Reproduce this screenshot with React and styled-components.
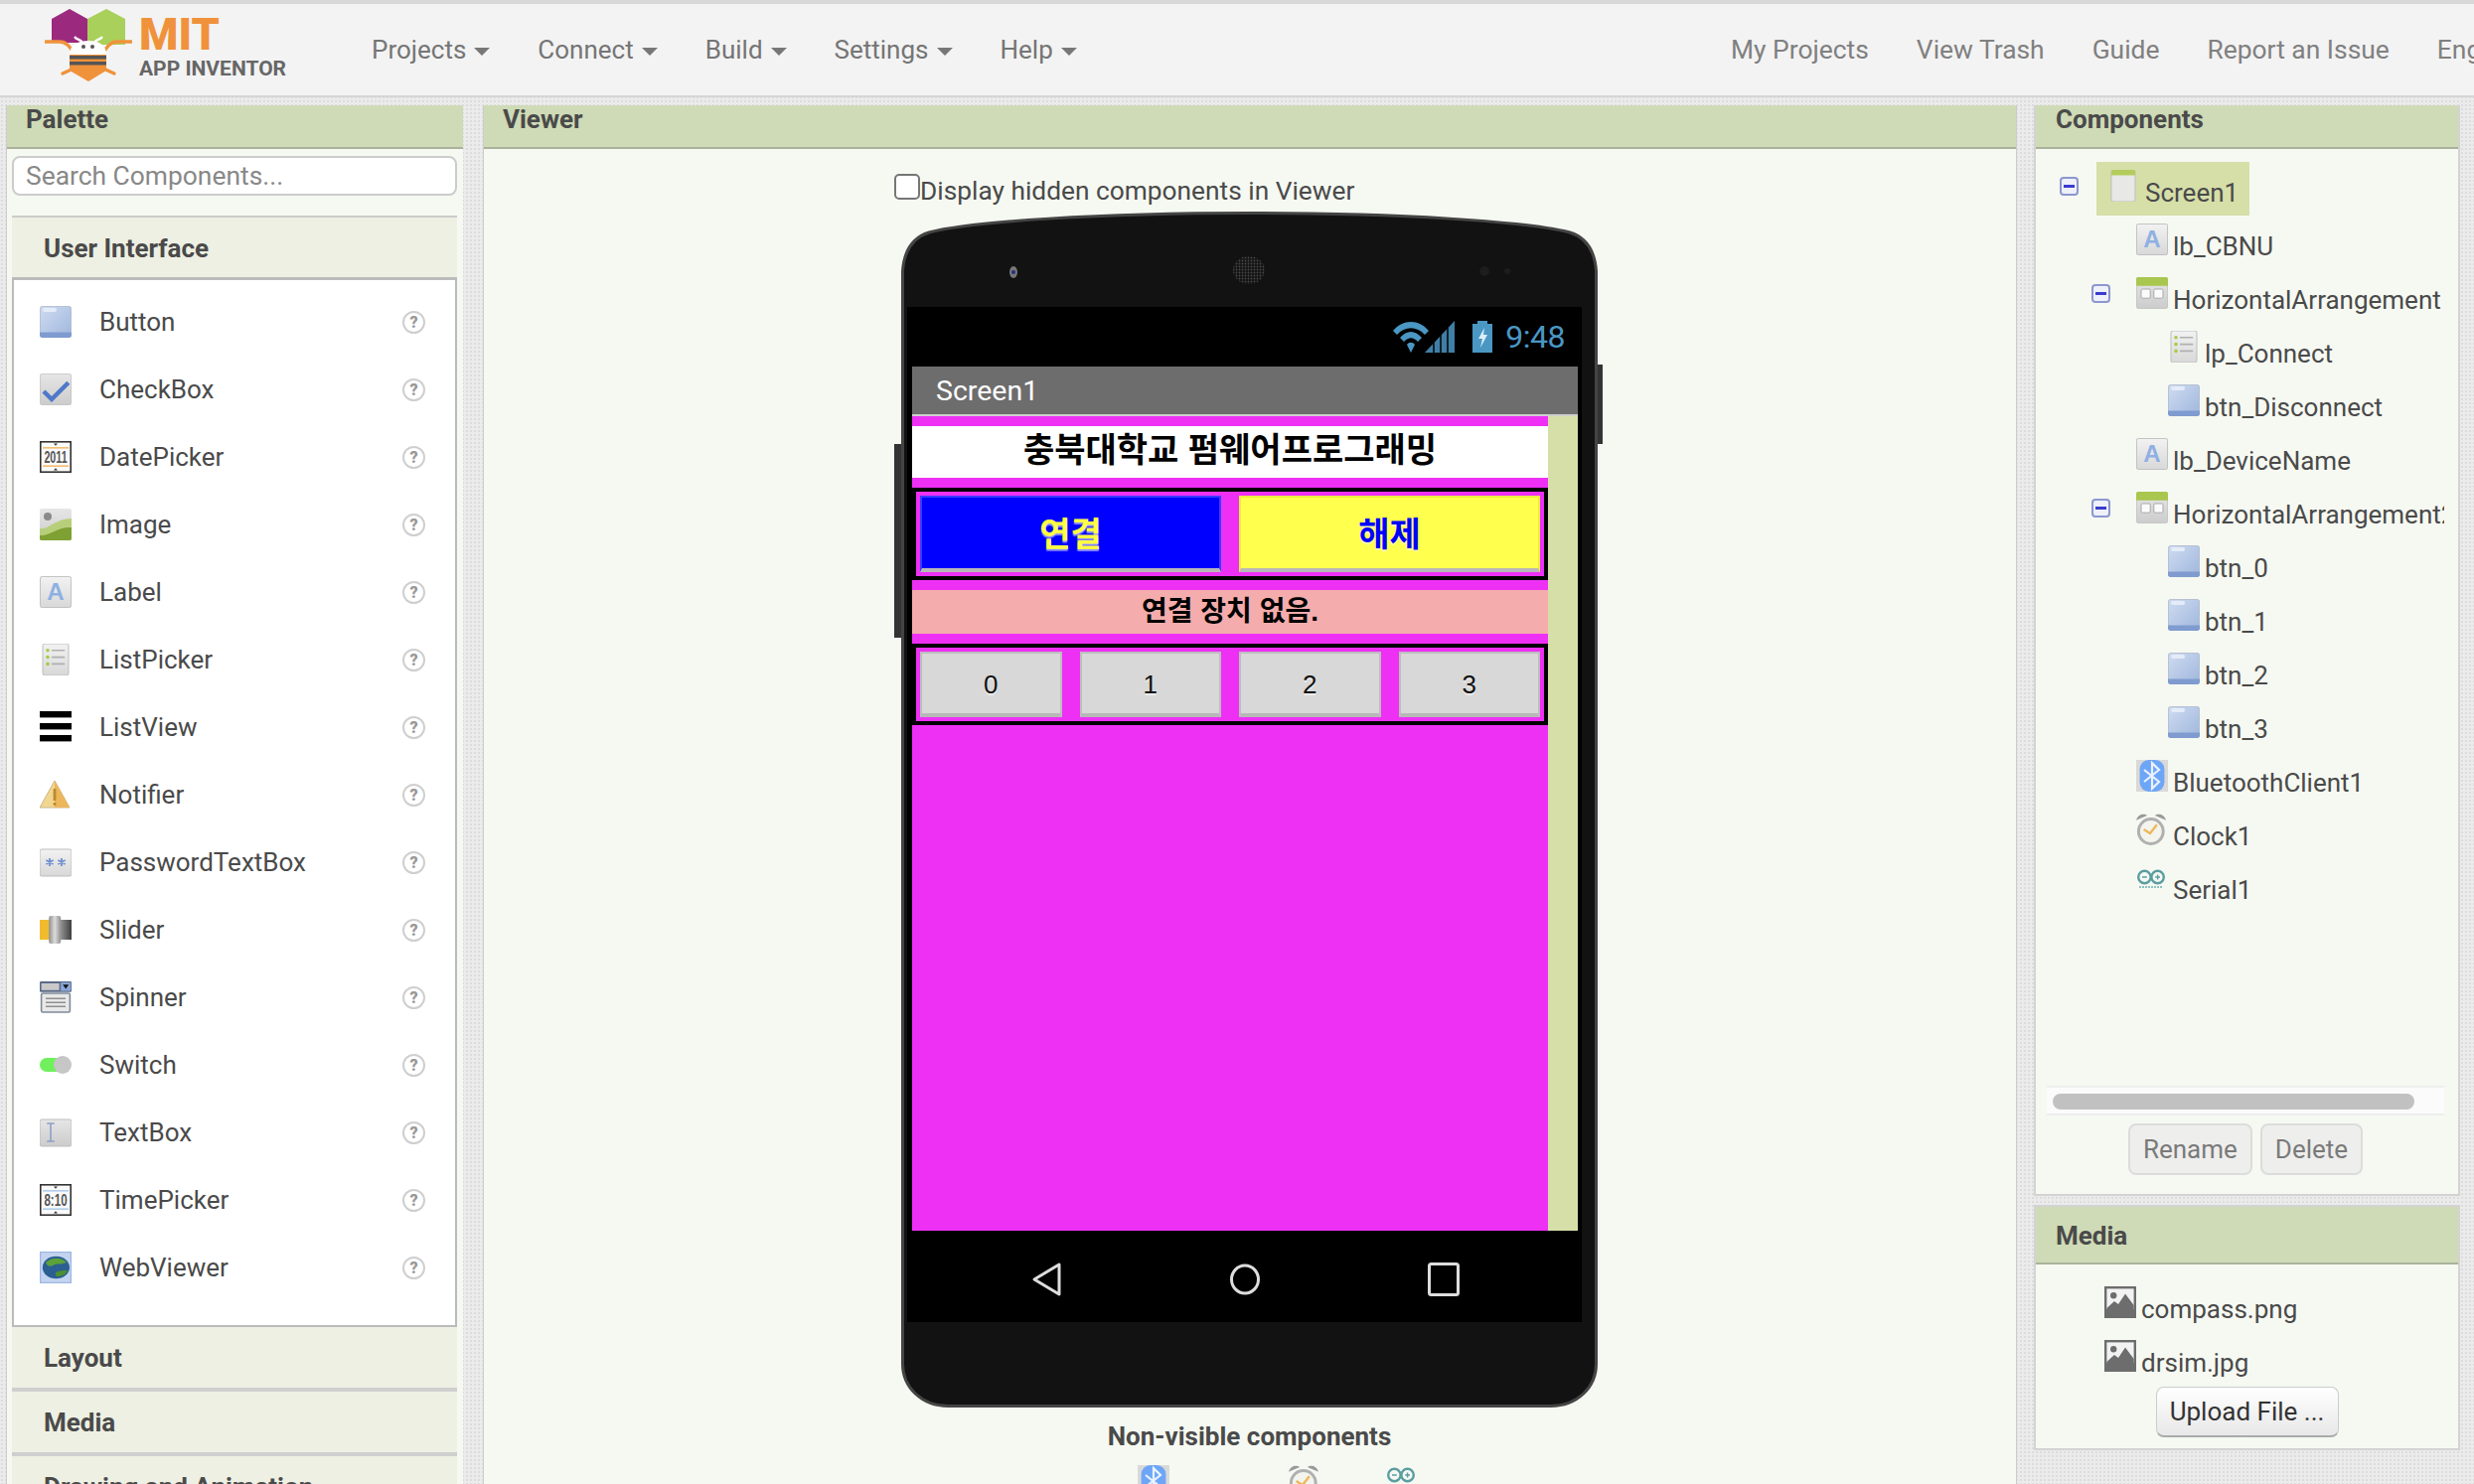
import React from "react"
import styled, { createGlobalStyle } from "styled-components"

const GlobalStyle = createGlobalStyle`
  html, body {
    margin: 0;
    padding: 0;
    background: #ebebeb;
  }
  * {
    box-sizing: border-box;
  }
`

const palette = [
  ["button", "Button"],
  ["checkbox", "CheckBox"],
  ["datepicker", "DatePicker"],
  ["image", "Image"],
  ["label", "Label"],
  ["listpicker", "ListPicker"],
  ["listview", "ListView"],
  ["notifier", "Notifier"],
  ["password", "PasswordTextBox"],
  ["slider", "Slider"],
  ["spinner", "Spinner"],
  ["switch", "Switch"],
  ["textbox", "TextBox"],
  ["timepicker", "TimePicker"],
  ["webviewer", "WebViewer"],
]

const tree = [
  { level: 0, icon: "screen", name: "Screen1", open: true, selected: true },
  { level: 1, icon: "label", name: "lb_CBNU" },
  { level: 1, icon: "arrangement", name: "HorizontalArrangement", open: true },
  { level: 2, icon: "listpicker", name: "lp_Connect" },
  { level: 2, icon: "button", name: "btn_Disconnect" },
  { level: 1, icon: "label", name: "lb_DeviceName" },
  { level: 1, icon: "arrangement", name: "HorizontalArrangement2", open: true },
  { level: 2, icon: "button", name: "btn_0" },
  { level: 2, icon: "button", name: "btn_1" },
  { level: 2, icon: "button", name: "btn_2" },
  { level: 2, icon: "button", name: "btn_3" },
  { level: 1, icon: "bluetooth", name: "BluetoothClient1" },
  { level: 1, icon: "clock", name: "Clock1" },
  { level: 1, icon: "serial", name: "Serial1" },
]

const icons = {
  button: (
    <>
      <rect x=".2" y=".2" width="15.6" height="15.6" rx="1.2" fill="url(#gBlue)" stroke="#a9b4c8" strokeWidth=".4" />
      <path d="M0 13.2 H16 V14.8 A1.2 1.2 0 0 1 14.8 16 H1.2 A1.2 1.2 0 0 1 0 14.8 Z" fill="#7f9bcf" />
      <rect x="1.5" y="1" width="7" height="2" rx="1" fill="#e4ecf8" />
    </>
  ),
  checkbox: (
    <>
      <rect x=".2" y=".2" width="15.6" height="15.6" rx="1" fill="url(#gGray)" stroke="#bdbdbd" strokeWidth=".4" />
      <path d="M2 9 L6 13 L14.4 4.6" fill="none" stroke="#4f78c8" strokeWidth="2.2" />
    </>
  ),
  datepicker: (
    <>
      <rect x=".4" y=".4" width="15.2" height="15.2" fill="#fafafa" stroke="#333" strokeWidth=".8" />
      <path d="M1.5 3.4 H14.5 M1.5 12.6 H14.5" stroke="#efa94a" strokeWidth=".6" />
      <path d="M7 1.2 H9 L8 2.4 Z M7 14.8 H9 L8 13.6 Z" fill="#333" />
      <text x="2.2" y="11" fontFamily="Liberation Sans" fontSize="8.6" fontWeight="700" fill="#555" textLength="11.6" lengthAdjust="spacingAndGlyphs">2011</text>
    </>
  ),
  image: (
    <>
      <rect width="16" height="16" rx="1" fill="url(#gGray)" />
      <circle cx="4" cy="4" r="2" fill="#8a8a8a" />
      <path d="M0 10 C4 11 8 5 16 5 V15 A1 1 0 0 1 15 16 H1 A1 1 0 0 1 0 15 Z" fill="#b7cf7a" />
      <path d="M0 13.5 C5 14 9 9 16 9.5 V15 A1 1 0 0 1 15 16 H1 A1 1 0 0 1 0 15 Z" fill="#7fa032" />
    </>
  ),
  label: (
    <>
      <rect x=".2" y=".2" width="15.6" height="15.6" rx="1" fill="url(#gLight)" stroke="#bdbdbd" strokeWidth=".5" />
      <text x="8" y="12.2" textAnchor="middle" fontFamily="Liberation Sans" fontSize="12" fontWeight="700" fill="#8fb0e2">A</text>
    </>
  ),
  listpicker: (
    <>
      <rect x="1.5" y="0" width="13" height="16" rx="1" fill="url(#gLight)" stroke="#bdbdbd" strokeWidth=".5" />
      <circle cx="4" cy="3.4" r=".9" fill="#a6cc48" />
      <circle cx="4" cy="6.8" r=".9" fill="#a6cc48" />
      <circle cx="4" cy="10.2" r=".9" fill="#a6cc48" />
      <path d="M6 3.4 H12.6 M6 6.8 H12.6 M6 10.2 H12.6" stroke="#b0b0b0" strokeWidth=".8" />
    </>
  ),
  listview: (
    <>
      <rect y="0" width="16" height="3.2" fill="#000" />
      <rect y="6" width="16" height="3.2" fill="#000" />
      <rect y="12" width="16" height="3.2" fill="#000" />
    </>
  ),
  notifier: (
    <>
      <path d="M7.5 1 L15 14.5 H0 Z" fill="#f3d68e" stroke="#c9b58a" strokeWidth=".5" />
      <path d="M7.5 1 L15 14.5 H7.5 Z" fill="#ecb65a" />
      <rect x="6.8" y="5" width="1.4" height="6" fill="#b98b32" />
      <rect x="6.8" y="12" width="1.4" height="1.4" fill="#b98b32" />
    </>
  ),
  password: (
    <>
      <rect y="1.5" width="16" height="13.5" rx="1" fill="url(#gLight)" stroke="#bdbdbd" strokeWidth=".5" />
      <path d="M5 6 V10 M3.2 7 L6.8 9 M3.2 9 L6.8 7 M11 6 V10 M9.2 7 L12.8 9 M9.2 9 L12.8 7" stroke="#6f8fd0" strokeWidth=".9" />
    </>
  ),
  slider: (
    <>
      <rect y="3" width="5" height="10" fill="#f0bb2e" />
      <rect x="10" y="3" width="6" height="10" fill="url(#gDark)" />
      <rect x="4.6" y="1" width="6" height="14" rx="1" fill="url(#gKnob)" />
    </>
  ),
  spinner: (
    <>
      <rect x=".8" y="6" width="14.4" height="9.5" rx=".8" fill="#e8e8e8" stroke="#7f8a99" strokeWidth=".8" />
      <path d="M3 8.6 H13 M3 10.6 H13 M3 12.6 H13" stroke="#8f8f8f" strokeWidth=".7" />
      <rect x="0" y="0" width="16" height="5.4" rx=".6" fill="#5b6b87" />
      <rect x=".8" y="1" width="9" height="3.4" fill="#c9c9c9" />
      <rect x="10.6" y=".6" width="5" height="4.2" fill="#8ba6d9" />
      <path d="M11.6 1.6 H14.6 L13.1 3.8 Z" fill="#111" />
    </>
  ),
  switch: (
    <>
      <rect x="0" y="4.5" width="13" height="7" rx="3.5" fill="#6ff05c" />
      <circle cx="11.5" cy="8" r="4.5" fill="#c6c6c6" />
    </>
  ),
  textbox: (
    <>
      <rect y="1.5" width="16" height="13.5" rx="1" fill="url(#gGray)" stroke="#bdbdbd" strokeWidth=".5" />
      <path d="M3.6 3.5 H7.4 M3.6 12.5 H7.4 M5.5 3.5 V12.5" stroke="#8da0c9" strokeWidth=".8" fill="none" />
    </>
  ),
  timepicker: (
    <>
      <rect x=".4" y=".4" width="15.2" height="15.2" fill="#fafafa" stroke="#333" strokeWidth=".8" />
      <path d="M1.5 3.4 H14.5 M1.5 12.6 H14.5" stroke="#9cc0e6" strokeWidth=".6" />
      <path d="M7 1.2 H9 L8 2.4 Z M7 14.8 H9 L8 13.6 Z" fill="#333" />
      <text x="2.2" y="11" fontFamily="Liberation Sans" fontSize="8.6" fontWeight="700" fill="#555" textLength="11.6" lengthAdjust="spacingAndGlyphs">8:10</text>
    </>
  ),
  webviewer: (
    <>
      <rect x=".3" y=".3" width="15.4" height="15.4" fill="#c3d4f0" stroke="#9db7e2" strokeWidth=".6" />
      <ellipse cx="8.2" cy="8" rx="6.8" ry="5.6" fill="#2b5f92" />
      <path d="M3 5.5 C6 2.6 11 2.6 13.5 5.5 C10 7 9 5.5 6.5 7 C5 8 3.5 7 3 5.5 Z" fill="#5da13a" />
      <path d="M8 10.5 C10 9.4 13 9.4 14 9.5 C13 12 10 13 8 12.2 Z" fill="#4c8f30" />
    </>
  ),
  screen: (
    <>
      <rect x="1.5" y="0" width="12" height="16" rx="1" fill="#e8e8e6" stroke="#bdbdbd" strokeWidth=".5" />
      <path d="M1.5 1 A1 1 0 0 1 2.5 0 H12.5 A1 1 0 0 1 13.5 1 V2.8 H1.5 Z" fill="#b4cc5a" />
    </>
  ),
  arrangement: (
    <>
      <rect x=".2" y=".2" width="15.6" height="15.6" rx="1" fill="url(#gGray)" stroke="#bdbdbd" strokeWidth=".4" />
      <path d="M0 1 A1 1 0 0 1 1 0 H15 A1 1 0 0 1 16 1 V4.4 H0 Z" fill="#a9c64e" />
      <rect x="2.5" y="6" width="4.6" height="4.6" rx=".6" fill="#fbfbfb" stroke="#a8a8a8" strokeWidth=".5" />
      <rect x="8.9" y="6" width="4.6" height="4.6" rx=".6" fill="#fbfbfb" stroke="#a8a8a8" strokeWidth=".5" />
    </>
  ),
  bluetooth: (
    <>
      <rect width="16" height="16" fill="#d9d9d9" />
      <rect x="1.8" y="0" width="12.4" height="16" rx="4.6" fill="#6ea6f7" />
      <path d="M4 5 L11.5 11 L8 14.4 V1.6 L11.5 5 L4 11" fill="none" stroke="#eaf2ff" strokeWidth="1.1" />
    </>
  ),
  clock: (
    <>
      <path d="M0 3.4 C1 0 4 -.2 5.6 1 Z M15 3.4 C14 0 11 -.2 9.4 1 Z" fill="#9a9a9a" />
      <circle cx="7.4" cy="9" r="6.2" fill="#f4f4ee" stroke="#b0b0b0" strokeWidth="1.5" />
      <path d="M3.8 8 L7 10 L10.4 5.6" fill="none" stroke="#eeb75a" strokeWidth="1.2" />
    </>
  ),
  serial: (
    <>
      <circle cx="4.2" cy="5" r="3.1" fill="none" stroke="#5a9ea1" strokeWidth="1.2" />
      <circle cx="10.8" cy="5" r="3.1" fill="none" stroke="#5a9ea1" strokeWidth="1.2" />
      <path d="M3 5 H5.4 M9.6 5 H12 M10.8 3.8 V6.2" stroke="#5a9ea1" strokeWidth=".7" />
      <path d="M1.5 10 H13.5" stroke="#8fc0c2" strokeWidth="1" strokeDasharray="1 .5" />
    </>
  ),
  media: (
    <>
      <rect width="16" height="16" fill="#6d6d6d" />
      <rect x="1.2" y="1.2" width="13.6" height="10.4" fill="#f2f2f2" />
      <circle cx="4.6" cy="4.6" r="1.6" fill="#6d6d6d" />
      <path d="M1.2 11 L5 7.5 L7 9 L10.5 3.8 L14.8 9.5 V12 H1.2 Z" fill="#6d6d6d" />
    </>
  ),
}

const Gradients = () => (
  <GradientDefs>
    <defs>
      <linearGradient id="gBlue" x1="0" y1="0" x2="1" y2="1">
        <stop offset="0" stopColor="#cfdcf1" />
        <stop offset="1" stopColor="#9fb6dd" />
      </linearGradient>
      <linearGradient id="gGray" x1="0" y1="0" x2="0" y2="1">
        <stop offset="0" stopColor="#e6e6e6" />
        <stop offset="1" stopColor="#cccccc" />
      </linearGradient>
      <linearGradient id="gLight" x1="0" y1="0" x2="0" y2="1">
        <stop offset="0" stopColor="#f2f2f2" />
        <stop offset="1" stopColor="#d8d8d8" />
      </linearGradient>
      <linearGradient id="gDark" x1="0" y1="0" x2="1" y2="0">
        <stop offset="0" stopColor="#9a9a9a" />
        <stop offset="1" stopColor="#3f3f3f" />
      </linearGradient>
      <linearGradient id="gKnob" x1="0" y1="0" x2="1" y2="0">
        <stop offset="0" stopColor="#8f8f8f" />
        <stop offset=".5" stopColor="#dcdcdc" />
        <stop offset="1" stopColor="#8f8f8f" />
      </linearGradient>
      <pattern id="gMesh" width="3" height="3" patternUnits="userSpaceOnUse">
        <circle cx="1.5" cy="1.5" r=".9" fill="#484848" />
      </pattern>
    </defs>
  </GradientDefs>
)

const Glyph = ({ name }) => <GlyphSvg viewBox="0 0 16 16">{icons[name]}</GlyphSvg>

const Logo = () => (
  <LogoMark viewBox="0 0 88 74">
    <path d="M25 0 L43 10 V34 H7 V10 Z" fill="#9b2a7f" />
    <path d="M62 0 L81 10 V36 H43 V10 Z" fill="#a9d05a" />
    <path d="M1 33 H15 C22 33 25 38 29 44 M87 33 H73 C66 33 63 38 59 44" fill="none" stroke="#f0923b" strokeWidth="3.4" strokeLinecap="round" />
    <path d="M29 60 L18 65 M59 60 L70 65" stroke="#f0923b" strokeWidth="3.4" strokeLinecap="round" />
    <path d="M30 28 C33 32 36 30 38 34 M58 28 C55 32 52 30 50 34" fill="none" stroke="#fff" strokeWidth="2.4" />
    <path d="M25 46 C25 36 34 32 44 32 C54 32 62 36 62 46 Z" fill="#fff" />
    <circle cx="39" cy="38" r="2" fill="#555" />
    <circle cx="48" cy="38" r="2" fill="#555" />
    <rect x="25" y="46" width="37" height="12" fill="#f0923b" />
    <rect x="25" y="47" width="37" height="3.5" fill="#555" />
    <rect x="25" y="53" width="37" height="3.5" fill="#555" />
    <path d="M25 57 H62 V62 L44 73 L25 62 Z" fill="#f0923b" />
  </LogoMark>
)

const Wifi = () => (
  <StatusSvg viewBox="-3 0 68 36" width="68" height="36">
    <path d="M1 12 C11 0 27 0 37 12 L33 16 C25 7 13 7 5 16 Z M8 19 C15 11 23 11 30 19 L26 23 C21 18 17 18 12 23 Z M15 26 C17 23 21 23 23 26 L19 34 Z" fill="#4a97c4" />
    <path d="M33 34 L63 2 V34 Z" fill="#3f7fa6" />
    <path d="M42 34 V24 M49 34 V16 M56 34 V9" stroke="#000" strokeWidth="1.5" />
  </StatusSvg>
)

const Battery = () => (
  <StatusSvg viewBox="0 0 22 32" width="22" height="32">
    <rect x="6" y="0" width="10" height="3" fill="#4a97c4" />
    <rect x="1" y="3" width="20" height="29" fill="#4a97c4" />
    <path d="M13 7 L7 18 H11 L9 27 L16 14 H12 Z" fill="#dbeef8" />
  </StatusSvg>
)

const NavIcons = () => (
  <>
    <NavSvg viewBox="0 0 32 36">
      <path d="M29 3 L4 18 L29 33 Z" fill="none" stroke="#ddd" strokeWidth="3" strokeLinejoin="round" />
    </NavSvg>
    <NavSvg viewBox="0 0 32 36">
      <ellipse cx="16" cy="18" rx="13.5" ry="14" fill="none" stroke="#ddd" strokeWidth="3" />
    </NavSvg>
    <NavSvg viewBox="0 0 32 36">
      <rect x="1.5" y="2.5" width="29" height="31" rx="2" fill="none" stroke="#ddd" strokeWidth="3" />
    </NavSvg>
  </>
)

const App = () => {
  return (
    <Page>
      <GlobalStyle />
      <Gradients />
      <Header>
        <Brand>
          <Logo />
          <BrandText>
            <BrandMit>MIT</BrandMit>
            <BrandName>APP INVENTOR</BrandName>
          </BrandText>
        </Brand>
        <MainNav>
          {["Projects", "Connect", "Build", "Settings", "Help"].map((item) => (
            <NavItem key={item}>
              {item}
              <Caret />
            </NavItem>
          ))}
        </MainNav>
        <SideNav>
          {["My Projects", "View Trash", "Guide", "Report an Issue", "English"].map((item) => (
            <NavItem key={item} $light>
              {item}
            </NavItem>
          ))}
        </SideNav>
      </Header>

      <Workspace>
        <PalettePanel>
          <PanelHead>Palette</PanelHead>
          <SearchBox placeholder="Search Components..." />
          <Category $first>User Interface</Category>
          <PaletteList>
            {palette.map(([icon, name]) => (
              <PaletteRow key={name}>
                <Glyph name={icon} />
                <PaletteName>{name}</PaletteName>
                <HelpBadge>?</HelpBadge>
              </PaletteRow>
            ))}
          </PaletteList>
          <Category>Layout</Category>
          <Category>Media</Category>
          <Category>Drawing and Animation</Category>
        </PalettePanel>

        <ViewerPanel>
          <PanelHead>Viewer</PanelHead>
          <ViewerBody>
            <ViewerColumn>
              <HiddenToggle>
                <HiddenCheck type="checkbox" />
                Display hidden components in Viewer
              </HiddenToggle>
              <Phone>
                <PhoneFrame viewBox="0 0 701 1204">
                  <path
                    d="M1.5 60 C3 38 12 26 28 21 C70 10 200 1.5 350 1.5 C500 1.5 631 10 673 21 C689 26 698 38 699.5 60 L699.5 1160 C699.5 1184 680 1202.5 654 1202.5 L47 1202.5 C21 1202.5 1.5 1184 1.5 1160 Z"
                    fill="#121212"
                    stroke="#444"
                    strokeWidth="3"
                  />
                  <ellipse cx="113" cy="61" rx="4" ry="6" fill="#777" />
                  <circle cx="113" cy="61" r="2" fill="#23307c" />
                  <ellipse cx="350" cy="59" rx="16" ry="14" fill="url(#gMesh)" />
                  <circle cx="587" cy="60" r="5" fill="#1d1d1d" />
                  <circle cx="610" cy="60" r="3" fill="#1d1d1d" />
                </PhoneFrame>
                <SideKey $side="left" />
                <SideKey $side="right" />
                <Screen>
                  <StatusBar>
                    <Wifi />
                    <Battery />
                    <StatusTime>9:48</StatusTime>
                  </StatusBar>
                  <AppArea>
                    <TitleBar>Screen1</TitleBar>
                    <FormRow>
                      <Form>
                        <FormLabel $large>충북대학교 펌웨어프로그래밍</FormLabel>
                        <Arrangement>
                          <FormButton $tall $bg="#0000ff" $fg="#ffff44" $edge="#3a3aff">연결</FormButton>
                          <FormButton $tall $bg="#ffff4d" $fg="#0000ff" $edge="#eded40">해제</FormButton>
                        </Arrangement>
                        <FormLabel $bg="#f4acac">연결 장치 없음.</FormLabel>
                        <Arrangement>
                          {["0", "1", "2", "3"].map((n) => (
                            <FormButton key={n} $bg="#d7d8d7" $fg="#111" $edge="#bdbdbd">{n}</FormButton>
                          ))}
                        </Arrangement>
                      </Form>
                      <ScrollStrip />
                    </FormRow>
                  </AppArea>
                  <NavBar>
                    <NavIcons />
                  </NavBar>
                </Screen>
              </Phone>
              <NonVisibleTitle>Non-visible components</NonVisibleTitle>
              <NonVisibleRow>
                <Glyph name="bluetooth" />
                <NonVisibleGap $w={120} />
                <Glyph name="clock" />
                <NonVisibleGap $w={66} />
                <Glyph name="serial" />
              </NonVisibleRow>
            </ViewerColumn>
          </ViewerBody>
        </ViewerPanel>

        <RightColumn>
          <ComponentsPanel>
            <PanelHead $pad={20}>Components</PanelHead>
            <TreeScroll>
              {tree.map((node) => (
                <TreeRow key={node.name} $level={node.level}>
                  <TreeToggle>{node.open && <MinusBox />}</TreeToggle>
                  <TreeNode $selected={node.selected}>
                    <Glyph name={node.icon} />
                    <TreeName>{node.name}</TreeName>
                  </TreeNode>
                </TreeRow>
              ))}
            </TreeScroll>
            <ScrollTrack>
              <ScrollThumb />
            </ScrollTrack>
            <ButtonBar>
              <DisabledButton>Rename</DisabledButton>
              <DisabledButton>Delete</DisabledButton>
            </ButtonBar>
          </ComponentsPanel>

          <MediaPanel>
            <MediaHead>Media</MediaHead>
            <MediaList>
              {["compass.png", "drsim.jpg"].map((file) => (
                <MediaRow key={file}>
                  <Glyph name="media" />
                  <TreeName>{file}</TreeName>
                </MediaRow>
              ))}
            </MediaList>
            <UploadButton>Upload File ...</UploadButton>
          </MediaPanel>
        </RightColumn>
      </Workspace>
    </Page>
  )
}

const Page = styled.div`
  position: relative;
  width: 2490px;
  height: 1494px;
  overflow: hidden;
  font-family: Roboto, "Noto Sans CJK KR", sans-serif;
  color: #4a4a4a;
  background-color: #ebebeb;
  background-image: radial-gradient(#dcdcdc 1px, transparent 1px);
  background-size: 4px 4px;
`

const GradientDefs = styled.svg`
  position: absolute;
  width: 0;
  height: 0;
`

const GlyphSvg = styled.svg`
  flex: none;
  width: 32px;
  height: 32px;
`

const Header = styled.header`
  display: flex;
  align-items: center;
  height: 98px;
  padding-left: 45px;
  overflow: hidden;
  background: #f3f3f3;
  border-top: 4px solid #d8d8d8;
  border-bottom: 2px solid #d5d5d5;
`

const Brand = styled.div`
  flex: 0 0 329px;
  display: flex;
  gap: 7px;
  margin-top: -8px;
`

const LogoMark = styled.svg`
  width: 88px;
  height: 74px;
`

const BrandText = styled.div`
  display: flex;
  flex-direction: column;
  margin-top: 5px;
`

const BrandMit = styled.span`
  font-size: 45px;
  line-height: 42px;
  font-weight: 900;
  color: #f0923b;
`

const BrandName = styled.span`
  font-size: 21px;
  line-height: 26px;
  font-weight: 700;
  color: #666;
  white-space: nowrap;
`

const MainNav = styled.nav`
  flex: 0 0 1368px;
  display: flex;
  gap: 48px;
`

const SideNav = styled.nav`
  flex: none;
  display: flex;
  gap: 48px;
`

const NavItem = styled.span`
  display: flex;
  align-items: center;
  gap: 8px;
  font-size: ${(p) => (p.$light ? "26.4px" : "26px")};
  color: ${(p) => (p.$light ? "#808080" : "#757575")};
  white-space: nowrap;
`

const Caret = styled.i`
  width: 0;
  height: 0;
  margin-top: 3px;
  border-left: 8px solid transparent;
  border-right: 8px solid transparent;
  border-top: 8px solid #777;
`

const Workspace = styled.main`
  display: grid;
  grid-template-columns: 460px 1544px 426px;
  column-gap: 20px;
  align-items: start;
  padding: 8px 0 0 6px;
`

const PalettePanel = styled.section`
  height: 1400px;
  background: #f6f9f2;
  border-left: 1px solid #ccc;
`

const PanelHead = styled.h2`
  height: 44px;
  margin: 0;
  padding: 0 0 0 ${(p) => p.$pad || 19}px;
  font-size: 26px;
  line-height: 28px;
  font-weight: 700;
  color: #4a4a4a;
  background: #cfdbb6;
  border-bottom: 2px solid #aab29a;
`

const SearchBox = styled.input`
  display: block;
  width: 448px;
  height: 40px;
  margin: 7px 0 20px 5px;
  padding: 0 12px;
  font-family: Roboto, sans-serif;
  font-size: 26.4px;
  background: #fff;
  border: 2px solid #ccc;
  border-radius: 8px;

  &::placeholder {
    color: #888;
  }
`

const Category = styled.div`
  width: 448px;
  height: ${(p) => (p.$first ? "62px" : "65px")};
  margin-left: 5px;
  padding: 0 0 0 32px;
  font-size: 26px;
  line-height: 62px;
  font-weight: 700;
  color: #4a4a4a;
  white-space: nowrap;
  background: #eef0e3;
  border-top: ${(p) => (p.$first ? "2px solid #ccc" : "0")};
  border-bottom: ${(p) => (p.$first ? "0" : "4px solid #cfcfcf")};
`

const PaletteList = styled.div`
  width: 448px;
  height: 1057px;
  margin-left: 5px;
  padding: 8px 30px 0 26px;
  background: #fff;
  border: 2px solid #bbb;
  border-top-width: 3px;
`

const PaletteRow = styled.div`
  display: flex;
  align-items: center;
  height: 68px;
`

const PaletteName = styled.span`
  flex: 1;
  margin-left: 28px;
  font-size: 26px;
  color: #4a4a4a;
`

const HelpBadge = styled.span`
  display: grid;
  place-items: center;
  width: 23px;
  height: 23px;
  font-size: 16px;
  font-weight: 900;
  color: #999;
  border: 2.5px solid #cfcfcf;
  border-radius: 50%;
`

const ViewerPanel = styled.section`
  height: 1400px;
  background: #f6f9f2;
  border-left: 1px solid #ccc;
  border-right: 1px solid #ccc;
`

const ViewerBody = styled.div`
  display: flex;
  justify-content: center;
  padding: 25px 1px 0 0;
`

const ViewerColumn = styled.div`
  width: 701px;
`

const HiddenToggle = styled.label`
  display: flex;
  align-items: flex-end;
  height: 38px;
  margin-left: -7px;
  padding-bottom: 8px;
  font-size: 26.3px;
  line-height: 26px;
  color: #4a4a4a;
  white-space: nowrap;
`

const HiddenCheck = styled.input`
  appearance: none;
  flex: none;
  align-self: flex-start;
  width: 26px;
  height: 26px;
  margin: 0;
  background: #fff;
  border: 2px solid #767676;
  border-radius: 5px;
`

const Phone = styled.div`
  position: relative;
  width: 701px;
  height: 1204px;
  padding: 96px 16px 0 6px;
`

const PhoneFrame = styled.svg`
  position: absolute;
  inset: 0;
  width: 701px;
  height: 1204px;
`

const SideKey = styled.div`
  position: absolute;
  top: ${(p) => (p.$side === "left" ? "234px" : "154px")};
  ${(p) => (p.$side === "left" ? "left: -7px;" : "right: -5px;")}
  width: ${(p) => (p.$side === "left" ? "7px" : "5px")};
  height: ${(p) => (p.$side === "left" ? "195px" : "80px")};
  background: #333;
`

const Screen = styled.div`
  position: relative;
  display: flex;
  flex-direction: column;
  height: 1022px;
  background: #000;
`

const StatusBar = styled.div`
  display: flex;
  align-items: center;
  justify-content: flex-end;
  height: 60px;
  padding-right: 17px;
  gap: 15px;
`

const StatusSvg = styled.svg`
  flex: none;
`

const StatusTime = styled.span`
  margin-left: -3px;
  font-size: 32px;
  font-weight: 400;
  letter-spacing: -0.5px;
  color: #4a97c4;
`

const AppArea = styled.div`
  flex: 1;
  display: flex;
  flex-direction: column;
  margin: 0 4px 0 5px;
`

const TitleBar = styled.div`
  height: 50px;
  padding-left: 24px;
  font-size: 28.5px;
  line-height: 50px;
  color: #fff;
  background: #6d6d6d;
  border-bottom: 2px solid #cfcfcf;
`

const FormRow = styled.div`
  flex: 1;
  display: flex;
`

const Form = styled.div`
  flex: 0 0 640px;
  display: flex;
  flex-direction: column;
  gap: 10px;
  padding: 10px 0;
  background: #ee30f5;
`

const ScrollStrip = styled.div`
  flex: 1;
  background: #d6dfa8;
`

const FormLabel = styled.div`
  height: ${(p) => (p.$large ? "52px" : "44px")};
  font-family: "Liberation Sans", "Noto Sans CJK KR", sans-serif;
  font-size: ${(p) => (p.$large ? "34px" : "28px")};
  font-weight: 700;
  line-height: ${(p) => (p.$large ? "48px" : "44px")};
  text-align: center;
  color: #000;
  background: ${(p) => p.$bg || "#fff"};
`

const Arrangement = styled.div`
  display: flex;
  gap: 18px;
  padding: 4px;
  background: #ee30f5;
  border: 4px solid #000;
`

const FormButton = styled.div`
  flex: 1;
  display: grid;
  place-items: center;
  height: ${(p) => (p.$tall ? "77px" : "66px")};
  padding-top: ${(p) => (p.$tall ? "0" : "2px")};
  padding-bottom: ${(p) => (p.$tall ? "3px" : "0")};
  font-family: "Liberation Sans", "Noto Sans CJK KR", sans-serif;
  font-size: ${(p) => (p.$tall ? "34px" : "26px")};
  font-weight: ${(p) => (p.$tall ? 700 : 400)};
  color: ${(p) => p.$fg};
  text-shadow: 0 2px 1px rgba(255, 255, 255, 0.55);
  background: ${(p) => p.$bg};
  border: 2px solid ${(p) => p.$edge};
  border-bottom: 4px solid #b8b8b8;
`

const NavBar = styled.div`
  display: flex;
  justify-content: center;
  gap: 168px;
  align-items: center;
  height: 92px;
  padding-top: 6px;
`

const NavSvg = styled.svg`
  width: 32px;
  height: 36px;
`

const NonVisibleTitle = styled.div`
  margin-top: 16px;
  font-size: 26px;
  line-height: 26px;
  font-weight: 700;
  text-align: center;
  color: #4a4a4a;
`

const NonVisibleRow = styled.div`
  display: flex;
  margin: 16px 0 0 238px;
`

const NonVisibleGap = styled.span`
  flex: none;
  width: ${(p) => p.$w}px;
`

const RightColumn = styled.div`
  display: flex;
  flex-direction: column;
  gap: 9px;
  margin-left: -3px;
`

const ComponentsPanel = styled.section`
  height: 1098px;
  background: #f6f9f2;
  border: 2px solid #d3d3d3;
  border-top: 0;
`

const TreeScroll = styled.div`
  height: 943px;
  margin-left: 11px;
  padding: 13px 0 0 13px;
  width: 400px;
  overflow: hidden;
`

const TreeRow = styled.div`
  display: flex;
  height: 54px;
  padding-left: ${(p) => p.$level * 32}px;
`

const TreeToggle = styled.div`
  flex: 0 0 37px;
  padding-top: 15px;
`

const MinusBox = styled.div`
  position: relative;
  width: 19px;
  height: 19px;
  background: #eef0fa;
  border: 2px solid #8c97cf;
  border-radius: 4px;

  &::after {
    content: "";
    position: absolute;
    top: 6px;
    left: 2px;
    width: 11px;
    height: 3px;
    background: #3b3bcf;
  }
`

const TreeNode = styled.div`
  display: flex;
  flex: none;
  gap: 5px;
  height: 54px;
  padding: 8px 11px 0 ${(p) => (p.$selected ? "12px" : "8px")};
  background: ${(p) => (p.$selected ? "#d6dfa8" : "transparent")};
`

const TreeName = styled.span`
  font-size: 26px;
  line-height: 47px;
  color: #4a4a4a;
  white-space: nowrap;
`

const ScrollTrack = styled.div`
  width: 400px;
  height: 30px;
  margin-left: 11px;
  padding: 6px;
  background: #fbfbfb;
  border-top: 2px solid #eee;
  border-bottom: 2px solid #eee;
`

const ScrollThumb = styled.div`
  width: 364px;
  height: 16px;
  background: #c1c1c1;
  border-radius: 8px;
`

const ButtonBar = styled.div`
  display: flex;
  justify-content: center;
  gap: 8px;
  width: 400px;
  margin: 8px 0 0 11px;
`

const DisabledButton = styled.button`
  height: 52px;
  padding: 0 13px;
  font-family: Roboto, sans-serif;
  font-size: 26px;
  color: #7a7a7a;
  background: #eeeeec;
  border: 2px solid #dcdcdc;
  border-radius: 8px;
`

const MediaPanel = styled.section`
  height: 247px;
  background: #f6f9f2;
  border: 2px solid #d3d3d3;
`

const MediaHead = styled.h2`
  height: 58px;
  margin: 0;
  padding-left: 20px;
  font-size: 26px;
  line-height: 58px;
  font-weight: 700;
  color: #4a4a4a;
  background: #cfdbb6;
  border-bottom: 2px solid #aab29a;
`

const MediaList = styled.div`
  padding: 14px 0 0 69px;
`

const MediaRow = styled.div`
  display: flex;
  gap: 5px;
  height: 54px;
  padding-top: 8px;
`

const UploadButton = styled.button`
  display: block;
  width: 184px;
  height: 51px;
  margin: 1px auto 0;
  font-family: Roboto, sans-serif;
  font-size: 26px;
  color: #333;
  background: linear-gradient(#ffffff, #e8e8e8);
  border: 1px solid #ccc;
  border-bottom: 2px solid #aaa;
  border-radius: 8px;
`

export default App
